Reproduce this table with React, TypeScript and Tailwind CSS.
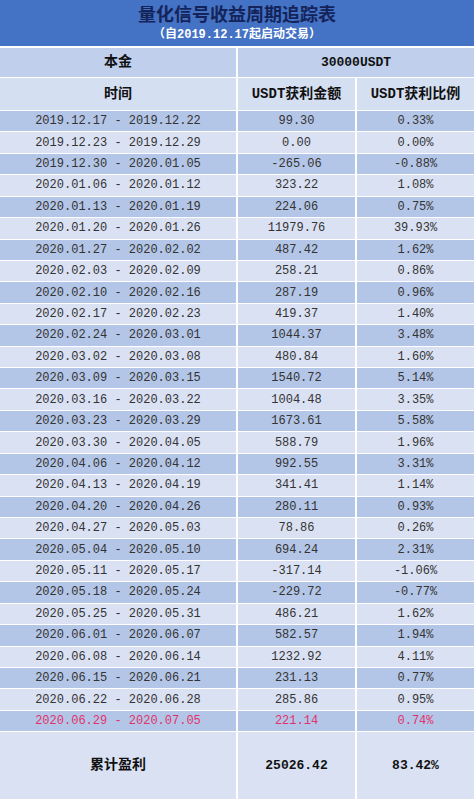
const rows: [string, string, string][] = [
  ["2019.12.17 - 2019.12.22", "99.30", "0.33%"],
  ["2019.12.23 - 2019.12.29", "0.00", "0.00%"],
  ["2019.12.30 - 2020.01.05", "-265.06", "-0.88%"],
  ["2020.01.06 - 2020.01.12", "323.22", "1.08%"],
  ["2020.01.13 - 2020.01.19", "224.06", "0.75%"],
  ["2020.01.20 - 2020.01.26", "11979.76", "39.93%"],
  ["2020.01.27 - 2020.02.02", "487.42", "1.62%"],
  ["2020.02.03 - 2020.02.09", "258.21", "0.86%"],
  ["2020.02.10 - 2020.02.16", "287.19", "0.96%"],
  ["2020.02.17 - 2020.02.23", "419.37", "1.40%"],
  ["2020.02.24 - 2020.03.01", "1044.37", "3.48%"],
  ["2020.03.02 - 2020.03.08", "480.84", "1.60%"],
  ["2020.03.09 - 2020.03.15", "1540.72", "5.14%"],
  ["2020.03.16 - 2020.03.22", "1004.48", "3.35%"],
  ["2020.03.23 - 2020.03.29", "1673.61", "5.58%"],
  ["2020.03.30 - 2020.04.05", "588.79", "1.96%"],
  ["2020.04.06 - 2020.04.12", "992.55", "3.31%"],
  ["2020.04.13 - 2020.04.19", "341.41", "1.14%"],
  ["2020.04.20 - 2020.04.26", "280.11", "0.93%"],
  ["2020.04.27 - 2020.05.03", "78.86", "0.26%"],
  ["2020.05.04 - 2020.05.10", "694.24", "2.31%"],
  ["2020.05.11 - 2020.05.17", "-317.14", "-1.06%"],
  ["2020.05.18 - 2020.05.24", "-229.72", "-0.77%"],
  ["2020.05.25 - 2020.05.31", "486.21", "1.62%"],
  ["2020.06.01 - 2020.06.07", "582.57", "1.94%"],
  ["2020.06.08 - 2020.06.14", "1232.92", "4.11%"],
  ["2020.06.15 - 2020.06.21", "231.13", "0.77%"],
  ["2020.06.22 - 2020.06.28", "285.86", "0.95%"],
  ["2020.06.29 - 2020.07.05", "221.14", "0.74%"],
];

const font = { fontFamily: '"Liberation Mono", "Noto Sans CJK SC", monospace' };

export default function App() {
  return (
    <div className="w-[474px] h-[800px] bg-white overflow-hidden" style={font}>
      {/* title band */}
      <div className="h-[46px] bg-[#4472c4] flex flex-col items-center pt-[5px]">
        <div className="text-[18px] leading-[22px] font-bold text-[#14245a]">量化信号收益周期追踪表</div>
        <div className="text-[12px] leading-[16px] font-bold text-white">（自2019.12.17起启动交易）</div>
      </div>

      <div className="mt-[2px] grid grid-cols-[236px_117px_1fr] gap-x-[2px] gap-y-px">
        <div className="h-[29px] bg-[#bfcfec] flex items-center justify-center text-[14px] font-bold text-[#111]">本金</div>
        <div className="col-span-2 h-[29px] bg-[#bfcfec] flex items-center justify-center text-[13px] font-bold text-[#111]">30000USDT</div>

        <div className="h-[32px] bg-[#d5dff2] flex items-center justify-center text-[14px] font-bold text-[#111]">时间</div>
        <div className="h-[32px] bg-[#d5dff2] flex items-center justify-center text-[14px] font-bold text-[#111]">USDT获利金额</div>
        <div className="h-[32px] bg-[#d5dff2] flex items-center justify-center text-[14px] font-bold text-[#111]">USDT获利比例</div>

        {rows.map((r, i) => {
          const bg = i % 2 === 0 ? "bg-[#b4c6e7]" : "bg-[#dae1f3]";
          const color = i === rows.length - 1 ? "text-[#e0336b]" : "text-[#333]";
          return r.map((c, j) => (
            <div
              key={`${i}-${j}`}
              className={`h-[20.43px] ${bg} ${color} flex items-center justify-center text-[12px]`}
            >
              {c}
            </div>
          ));
        })}

        <div className="h-[67px] bg-[#dae1f3] flex items-center justify-center text-[14px] font-bold text-[#111]">累计盈利</div>
        <div className="h-[67px] bg-[#dae1f3] flex items-center justify-center text-[13px] font-bold text-[#111]">25026.42</div>
        <div className="h-[67px] bg-[#dae1f3] flex items-center justify-center text-[13px] font-bold text-[#111]">83.42%</div>
      </div>
    </div>
  );
}
